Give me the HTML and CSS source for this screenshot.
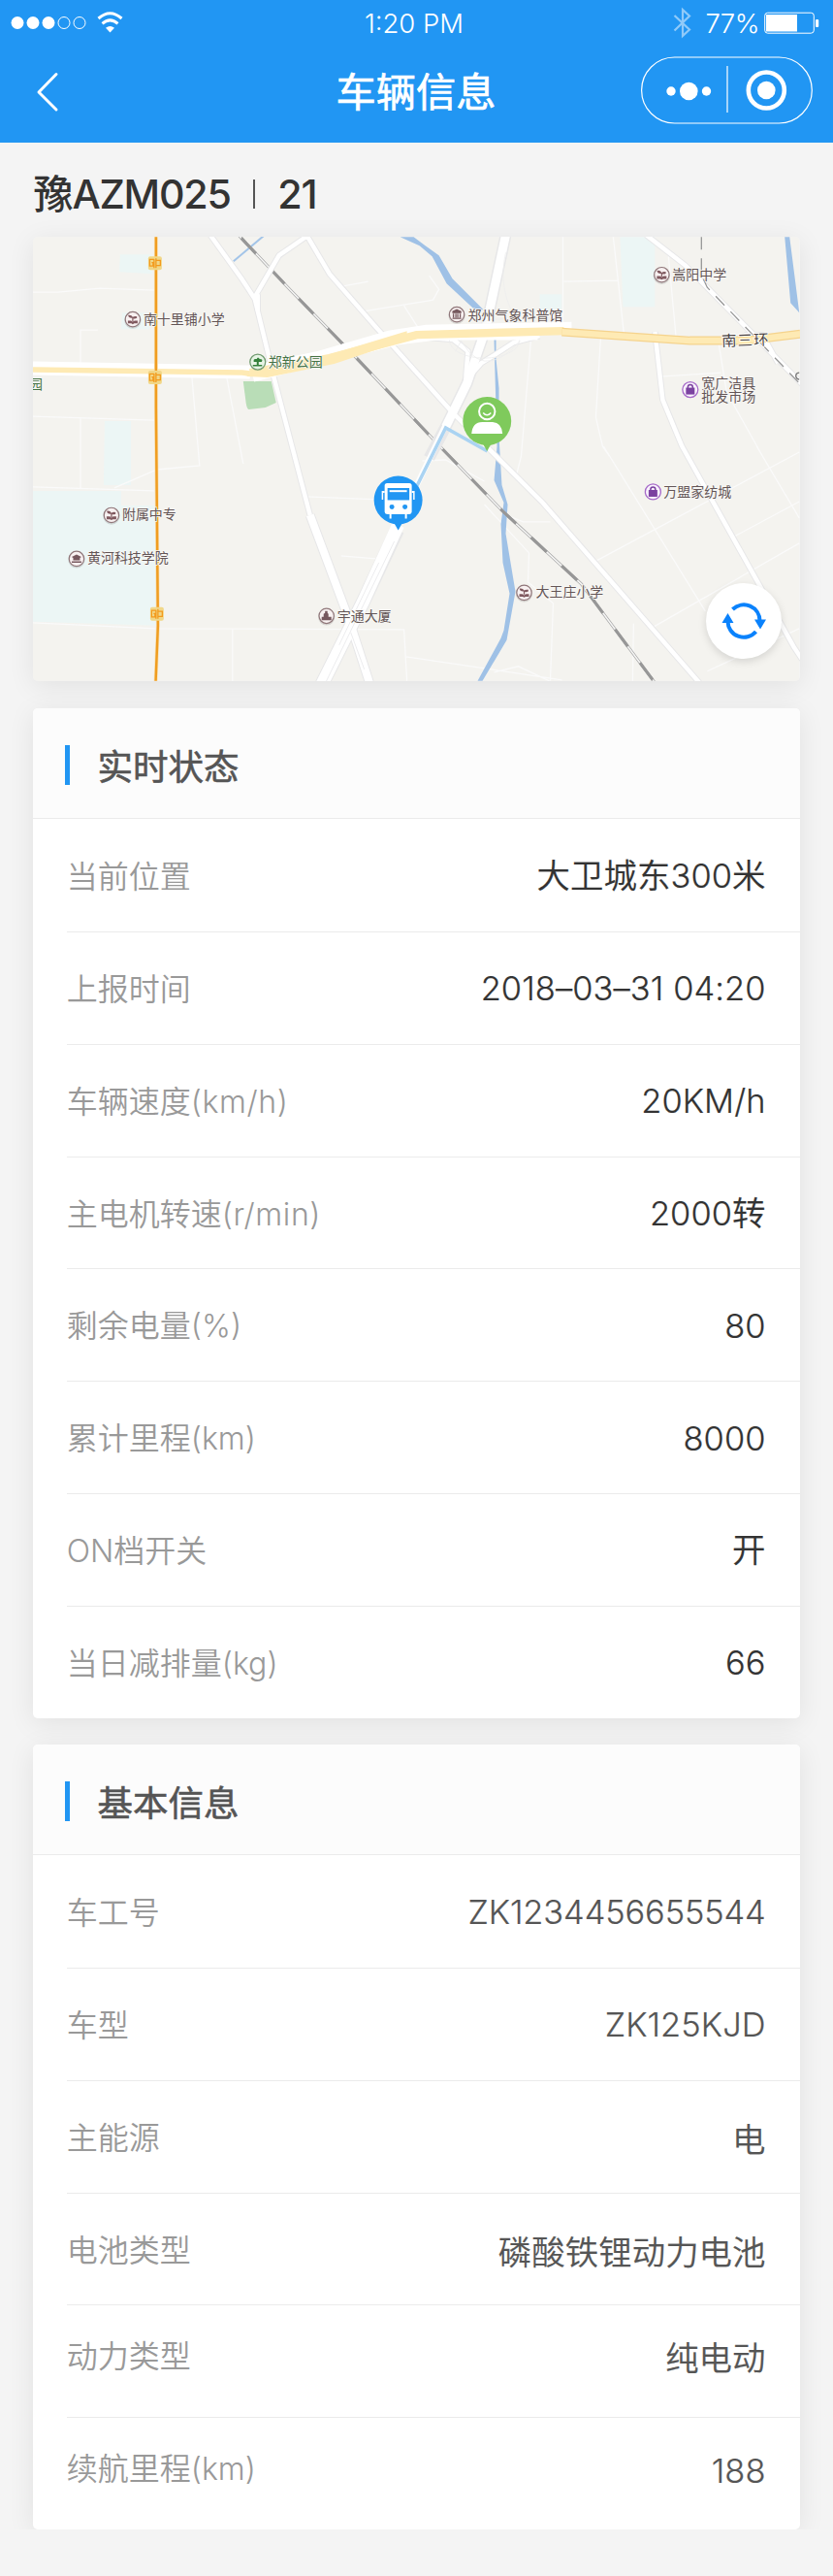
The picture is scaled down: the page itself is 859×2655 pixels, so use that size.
FILE: index.html
```html
<!DOCTYPE html>
<html lang="zh-CN">
<head>
<meta charset="utf-8">
<title>车辆信息</title>
<link rel="stylesheet" href="styles.css">
</head>
<body>
<header class="topbar">
  <div class="status">
    <svg class="signal" viewBox="0 0 130 40" width="130" height="40">
      <g fill="#fff"><circle cx="18" cy="23.500" r="6.500"/><circle cx="34" cy="23.500" r="6.500"/><circle cx="50" cy="23.500" r="6.500"/></g>
      <g fill="none" stroke="#fff" stroke-width="1"><circle cx="66" cy="23.500" r="6"/><circle cx="82" cy="23.500" r="6"/></g>
      <g fill="none" stroke="#fff" stroke-width="3"><path d="M101.500 19Q113.500 8.500 125.500 19"/><path d="M105.500 24.300Q113.500 17.500 121.500 24.300"/></g>
      <path fill="#fff" d="M109 28.800Q113.500 25 118 28.800L113.500 33.500z"/>
    </svg>
    <span class="clock">1:20 PM</span>
    <div class="power">
      <svg viewBox="0 0 20 34" width="20" height="34"><path d="M2 9.500L17.500 24 10.500 30.500V3.500L17.500 10 2 25" transform="translate(-.5 -.5)" fill="none" stroke="#90caf9" stroke-width="2.200"/></svg>
      <span class="percent">77%</span>
      <svg viewBox="0 0 58 24" width="58" height="24"><rect x=".7" y="1.200" width="50.600" height="21" rx="3" fill="none" stroke="#fff"/><rect x="2" y="3" width="32" height="17.500" fill="#fff"/><rect x="53" y="8" width="3.200" height="8" rx="1" fill="#fff"/></svg>
    </div>
  </div>
  <nav class="nav">
    <svg class="back" viewBox="0 0 24 42" width="24" height="42"><path d="M21 2.500L3 21l18 18" fill="none" stroke="#fff" stroke-width="3" stroke-linecap="round" stroke-linejoin="round"/></svg>
    <h1 class="title">车辆信息</h1>
    <div class="capsule">
      <svg viewBox="0 0 177 70" width="177" height="70"><rect x=".6" y="1" width="175.700" height="68" rx="34" fill="none" stroke="#fff" stroke-width="1.200"/><path d="M89 10v48" stroke="#fff" stroke-width="1.200"/><g fill="#fff"><circle cx="31" cy="36" r="4.700"/><circle cx="49.300" cy="36" r="9.300"/><circle cx="67.500" cy="36" r="4.700"/><circle cx="129.300" cy="35" r="9.300"/></g><circle cx="129.300" cy="35" r="18.500" fill="none" stroke="#fff" stroke-width="4.600"/></svg>
    </div>
  </nav>
</header>
<main class="content">
  <h2 class="plate"><span class="plate-no">豫AZM025</span><i class="bar"></i><span class="route">21</span></h2>
  <section class="map">
    <svg class="map-art" viewBox="34 244 791 458" width="791" height="458">
      <defs>
        <g id="ring"><circle r="8.700" fill="#000" opacity=".12" cy="1"/><circle r="7.700" fill="#f8f1f1" stroke="#90777a" stroke-width="1.200"/></g>
        <g id="school"><use href="#ring"/><path d="M-4.800-4.300Q-1.500-5 0-2.300 1.500-3.500 4.300-3V-1.300Q2.500-.3.600-.8V2H-.6V-1.300Q-4.500-1-4.800-4.300zM-5 1.300H-2Q0 2 0 2.800 0 2 2 1.300H5V4.200H1.500L0 5-1.500 4.200H-5z" fill="#80595f"/></g>
        <g id="mall"><circle r="8" fill="#f9f2fd" stroke="#a66ac8" stroke-width="1.300"/><path d="M-4.500-2H4.500V5H-4.500z" fill="#7b42a0"/><path d="M-2.500-1V-2.500a2.500 2.500 0 0 1 5 0V-1" fill="none" stroke="#7b42a0" stroke-width="1.500"/></g>
        <g id="metro"><rect x="-7" y="-7" width="14" height="14" rx="2" fill="#f1d788"/><path d="M-1-3.800H-5.500V3H-2V-.5H-3.500M1-5V5M1.500-2.800H5.500V2.500H1.500M-1-4V5" fill="none" stroke="#f39a1c" stroke-width="1.300"/></g>
      </defs>
      <rect x="34" y="244" width="791" height="458" fill="#f4f3ef"/>
      <g fill="#ecf6f5">
        <path d="M124 262h33v20l-34-2zM126 322h28v17h-29zM108 434h27v66h-28zM34 506h91v15h36v124l-127-4zM557 303h23v18h-23zM640 244h36v72h-33z"/>
      </g>
      <path d="M251 393h29l5 22-11 5-17 2q-2 0-3-6z" fill="#b9ddb7"/>
      <g fill="none" stroke="#fafafa" stroke-width="1.300">
        <path d="M34 301H60L103 297 160 299M83 387V340H101M34 429L159 433M83 430V504M198 388L206 480 162 484 118 503M234 389L251 478M34 502L159 506M34 642L160 648 417 649 420 702M240 648V702M353 295L380 290M374 321L447 309 453 298 443 284M417 315L433 340M581 244V336M582 290L638 289M633 244L644 344M690 264L698 350M620 348L615 430 622 460 629 470M681 388L744 384M742 355L750 404 787 470 825 534M548 350L538 470 532 494M316 512L390 515M436 475L460 474 500 496M352 573L388 576M419 677L580 701M510 693L535 687 567 702M500 520L546 570 545 600 571 622 568 702M525 532L540 538 568 538M612 580L825 466M758 553L825 517M675 646L825 560M730 692L825 648M653 702L654 643M623 460L728 630M781 460L825 534"/>
      </g>
      <g fill="#9fc1e6">
        <path d="M413 244H427L439 253 453 263 467 287 499 319 489 318 461 292 446 264 433 253zM810 244H815L825 322 816 312zM510 350H512V370L515 400V450L518 500 524 520 522 550 532 610 523 660 498 702H493L517 658 520 650 526 612 519 580 517 540 520 518 510 495 513 460z"/>
      </g>
      <path d="M241 269L272 243" stroke="#a3c4e8" stroke-width="2"/>
      <!-- railway -->
      <g fill="none"><path d="M247 243L300 299 369 370 455 461 520 528 600 602 676 704" stroke="#aaa" stroke-width="3"/><path d="M247 243L300 299 369 370 455 461 520 528 600 602 676 704" stroke="#f6f6f5" stroke-width="1.500"/><path d="M247 243L300 299 369 370 455 461 520 528 600 602 676 704" stroke="#979797" stroke-width="3" stroke-dasharray="22 21" stroke-dashoffset="-3"/></g>
      <!-- secondary roads: grey casing under white fill -->
      <g fill="none" stroke-linejoin="round">
        <g stroke="#e7e7e8">
          <path d="M217 242L250 288 263 308 283 390 304 470 320 531" stroke-width="6.500"/>
          <path d="M263 306L288 263 317 243 340 282 388 337 466 424 560 518 722 704M266 303L266 320M667 242L707 273 775 342 828 396M676 342L684 412 704 460 820 668 828 680M768 345L787 345 803 374M419 346L468 350 483 362 481 386 481 394M557 346L530 353 510 366 497 374 483 390" stroke-width="6.500"/>
          <path d="M522 242L501 340 482 395 460 440 443 472" stroke-width="12"/>
          <path d="M410 546L375 620 332 706" stroke-width="15"/>
          <path d="M320 531L360 638 382 706" stroke-width="10"/>
        </g>
        <g stroke="#fff">
          <path d="M217 242L250 288 263 308 283 390 304 470 320 531" stroke-width="4.500"/>
          <path d="M263 306L288 263 317 243 340 282 388 337 466 424 560 518 722 704M266 303L266 320M667 242L707 273 775 342 828 396M676 342L684 412 704 460 820 668 828 680M768 345L787 345 803 374M419 346L468 350 483 362 481 386 481 394M557 346L530 353 510 366 497 374 483 390" stroke-width="4.500"/>
          <path d="M522 242L501 340 482 395 460 440" stroke-width="9"/>
          <path d="M460 438L411 540" stroke-width="6"/>
          <path d="M411 541L375 620 332 706" stroke-width="13"/>
          <path d="M320 531L360 638 382 706" stroke-width="8"/>
        </g>
        <path d="M407 558L335 706M391 580L350 665M362 652L376 690" stroke="#ececee"/>
        <g stroke="#eee" stroke-width=".8"><ellipse cx="500" cy="351" rx="36" ry="18"/><path d="M471 341Q496 398 537 351M522 260Q513 300 535 332M470 362Q492 315 542 334"/></g>
      </g>
      <path d="M724 244V283L730 296 828 398" fill="none" stroke="#979797" stroke-width="1.300" stroke-dasharray="13 9"/>
      <!-- ring road -->
      <g fill="none"><path d="M34 381L258 385M34 378L258 382 330 367 402 346 440 340 590 337M261 388L410 350 450 345 555 345" stroke="#fff" stroke-width="11"/><path d="M34 381L250 384 258 385" stroke="#feeab4" stroke-width="5.500"/><path d="M258 384L340 369 430 345 582 341" stroke="#feeab4" stroke-width="8.500"/><path d="M255 385Q275 383 345 364L420 341V350L345 375 276 389 255 388z" fill="#feeab4"/><path d="M580 342L712 351H770L826 344" stroke="#f5d38d" stroke-width="9"/><path d="M580 342L712 351H770L826 344" stroke="#feeab4" stroke-width="6.500"/></g>
      <path d="M161 244V420L163 645 160.700 702" fill="none" stroke="#f7e2b7" stroke-width="4"/><path d="M161 244V420L163 645 160.700 702" fill="none" stroke="#f09d20" stroke-width="2.500"/>
      <use href="#metro" x="160" y="271"/><use href="#metro" x="160" y="389"/><use href="#metro" x="162" y="633"/>
      <path d="M411 540L460 441 503 465" fill="none" stroke="#aad3f2" stroke-width="3.500"/>
      <use href="#school" x="137" y="329"/><use href="#school" x="683" y="283"/><use href="#school" x="115" y="531"/><use href="#school" x="541" y="611"/>
      <g transform="translate(79 576)"><use href="#ring"/><path d="M-5-2L0-4.500 5-2 3.500-1V1.500H-3.500V-1zM-5 2.500H5V4H-5z" fill="#76585e"/></g>
      <g transform="translate(337 635)"><use href="#ring"/><path d="M-5 4.500V1H-3V-2L-1.500-3V-5H1V-3L2-2V1H5V4.500z" fill="#76585e"/></g>
      <g transform="translate(471.500 324)"><use href="#ring"/><path d="M-4-3L0-5 4-3V-2H-4zM-3.500-1V3M-1-1V3M1-1V3M3.500-1V3M-4.500 4H4.500" stroke="#76585e" stroke-width="1.300" fill="#76585e"/></g>
      <g transform="translate(266 373)"><circle r="8" fill="#e7f4e5" stroke="#719b70" stroke-width="1.300"/><path d="M-4 0Q-5-4-1-3 0-6 2-3 6-3 4 0H1V3H4.500V4.500H-5V3H-1V0z" fill="#34803a"/></g>
      <use href="#mall" x="712.500" y="401.500"/><use href="#mall" x="674" y="507"/>
      <g class="labels">
        <text x="148" y="334">南十里铺小学</text><text class="park" x="277" y="378">郑新公园</text><text class="park" x="30" y="401">园</text>
        <text x="483" y="330">郑州气象科普馆</text><text x="694" y="288">嵩阳中学</text>
        <text class="road" transform="rotate(-2 745 357)" x="745" y="357">南三环</text>
        <text x="724" y="400">宽广洁具</text><text x="724" y="414">批发市场</text><text x="685" y="512">万盟家纺城</text>
        <text x="126" y="535">附属中专</text><text x="90" y="580">黄河科技学院</text><text x="348" y="640">宇通大厦</text><text x="553" y="615">大王庄小学</text>
      </g>
      <path d="M825 384a3.500 3.500 0 1 0 0 7" fill="none" stroke="#777" stroke-width="1.400"/>
      <g transform="translate(502.700 434)"><path d="M-4 24L0 31 4 24z" fill="#7fca5c"/><circle r="25" fill="#7fca5c"/><circle cy="-10" r="8.200" fill="none" stroke="#fff" stroke-width="2"/><path d="M-4-8.500Q0-4 4-8.500" fill="none" stroke="#fff" stroke-width="1.500"/><path d="M-16 13Q-15 1-5 1H5Q15 1 16 13z" fill="#fff"/></g>
      <g transform="translate(411 515.500)"><path d="M-4 24L0 31 4 24z" fill="#2196f3"/><circle r="25" fill="#2196f3"/><path d="M-14-9.500H-17V-.5H-15.500V-7.500H-14zM14-9.500H17V-.5H15.500V-7.500H14z" fill="#fff"/><path d="M-11.500-17.500H11.500Q14-17.500 14-15V12Q14 14.500 11.500 14.500H9V19H7V14.500H-7V19H-9V14.500H-11.500Q-14 14.500-14 12V-15Q-14-17.500-11.500-17.500z" fill="#fff"/><path d="M-11-12.500H11.500V0H-11z" fill="#2196f3"/><path d="M-9-9.300H9" stroke="#fff" stroke-width="2"/><circle cx="-6.500" cy="7" r="2.500" fill="#2196f3"/><circle cx="7" cy="7" r="2.500" fill="#2196f3"/></g>
    </svg>
    <button class="refresh" aria-label="刷新"><svg viewBox="-39 -39 78 78" width="78" height="78"><g fill="none" stroke="#0a82fc" stroke-width="4"><path d="M-11.500-12A16.500 16.500 0 0 1 16.500 0"/><path d="M12.500 11A16.500 16.500 0 0 1-16.500 0"/></g><path d="M11-1.500H23L17 8.500zM-22.500 2H-10.500L-16.500-8z" fill="#0a82fc"/></svg></button>
  </section>
  <section class="card">
    <h3 class="card-title">实时状态</h3>
    <dl class="rows">
      <div class="row"><dt>当前位置</dt><dd>大卫城东300米</dd></div>
      <div class="row"><dt>上报时间</dt><dd>2018–03–31 04:20</dd></div>
      <div class="row"><dt>车辆速度<span class="unit">(km/h)</span></dt><dd>20KM/h</dd></div>
      <div class="row"><dt>主电机转速<span class="unit">(r/min)</span></dt><dd>2000转</dd></div>
      <div class="row"><dt>剩余电量(%)</dt><dd>80</dd></div>
      <div class="row"><dt>累计里程(km)</dt><dd>8000</dd></div>
      <div class="row"><dt>ON档开关</dt><dd>开</dd></div>
      <div class="row"><dt>当日减排量(kg)</dt><dd>66</dd></div>
    </dl>
  </section>
  <section class="card basic">
    <h3 class="card-title">基本信息</h3>
    <dl class="rows">
      <div class="row"><dt>车工号</dt><dd class="serial">ZK1234456655544</dd></div>
      <div class="row"><dt>车型</dt><dd>ZK125KJD</dd></div>
      <div class="row"><dt>主能源</dt><dd class="low">电</dd></div>
      <div class="row"><dt>电池类型</dt><dd class="low">磷酸铁锂动力电池</dd></div>
      <div class="row raised"><dt>动力类型</dt><dd class="low">纯电动</dd></div>
      <div class="row raised"><dt>续航里程(km)</dt><dd class="low">188</dd></div>
    </dl>
  </section>
</main>
</body>
</html>
```
FILE: styles.css
```css
* { box-sizing: border-box; }
body { margin: 0; background: #f4f4f4; color: #333; font-family: Inter, "Noto Sans CJK SC", sans-serif; }
h1, h2, h3, dl, dd { margin: 0; font-weight: 400; }
svg { display: block; }

.topbar { height: 146.600px; background: #2196f3; color: #fff; }
.status { display: grid; grid-template-columns: minmax(0, 1fr) auto minmax(0, 1fr); height: 47px; align-items: center; }
.clock { margin-right: 5px; font-size: 27.500px; font-weight: 300; }
.signal { align-self: start; }
.power { display: flex; align-items: center; justify-content: flex-end; padding-right: 13px; }
.percent { font-size: 27.500px; font-weight: 300; letter-spacing: -.5px; margin: 0 5px 0 13px; }
.nav { display: grid; grid-template-columns: 1fr auto 1fr; align-items: center; padding: 11px 21px 0 37px; }
.title { margin: 5px 17px 0 0; font-size: 41.200px; line-height: 65px; -webkit-text-stroke: .7px #fff; }
.capsule { justify-self: end; margin-left: -17px; }
.back { margin-top: 3px; }

.content { padding: 0 34.400px; }
.plate { display: flex; align-items: center; height: 97.400px; padding-top: 9px; font-size: 41.200px; line-height: 50px; font-weight: 500; letter-spacing: -1.200px; }
.bar { width: 2.500px; height: 30px; margin: 0 23px 0 23px; background: #555; }

.map, .card { border-radius: 5px; box-shadow: 0 5px 28px rgba(0, 0, 0, .08); }
.map { position: relative; height: 458px; }
.map-art { width: 100%; height: 100%; border-radius: 5px; }
.labels { font-family: "Noto Sans CJK SC", sans-serif; font-size: 14px; fill: #635556; paint-order: stroke; stroke: #f8f7f4; stroke-width: 1.500px; }
.labels .park { fill: #467346; }
.labels .road { font-size: 15.500px; letter-spacing: 1px; fill: #4c4444; stroke: #fff; }
.refresh { position: absolute; right: 19px; bottom: 23px; width: 78px; height: 78px; padding: 0; border: 0; border-radius: 50%; background: #fff; box-shadow: 0 3px 8px rgba(0, 0, 0, .13); }

.card { margin-top: 28px; background: #fff; overflow: hidden; }
.card + .card { margin-top: 27.300px; }
.card-title { display: flex; align-items: center; height: 114.300px; padding-left: 33px; padding-top: 4px; background: #fcfcfc; border-bottom: 1px solid #ebebeb; color: #555; font-size: 36.500px; -webkit-text-stroke: .6px #555; }
.card-title::before { content: ""; width: 4.500px; height: 41px; margin-right: 28.500px; background: #2196f3; }
.rows { padding-left: 34.400px; }
.row { display: flex; align-items: center; justify-content: space-between; height: 115.800px; padding: 2px 35px 0 0; }
.row + .row { border-top: 1px solid #ebebeb; }
.raised { padding-bottom: 13px; }
dt { color: #999; font-size: 32px; line-height: 46px; font-weight: 350; padding-top: 1px; }
.unit { letter-spacing: .6px; }
dd { color: #333; font-size: 34.400px; line-height: 50px; font-weight: 350; letter-spacing: .1px; -webkit-text-stroke: .2px currentColor; }
.basic dd { color: #555; }
.basic .serial { letter-spacing: -.1px; }
.basic .low { padding-top: 5px; }
```
